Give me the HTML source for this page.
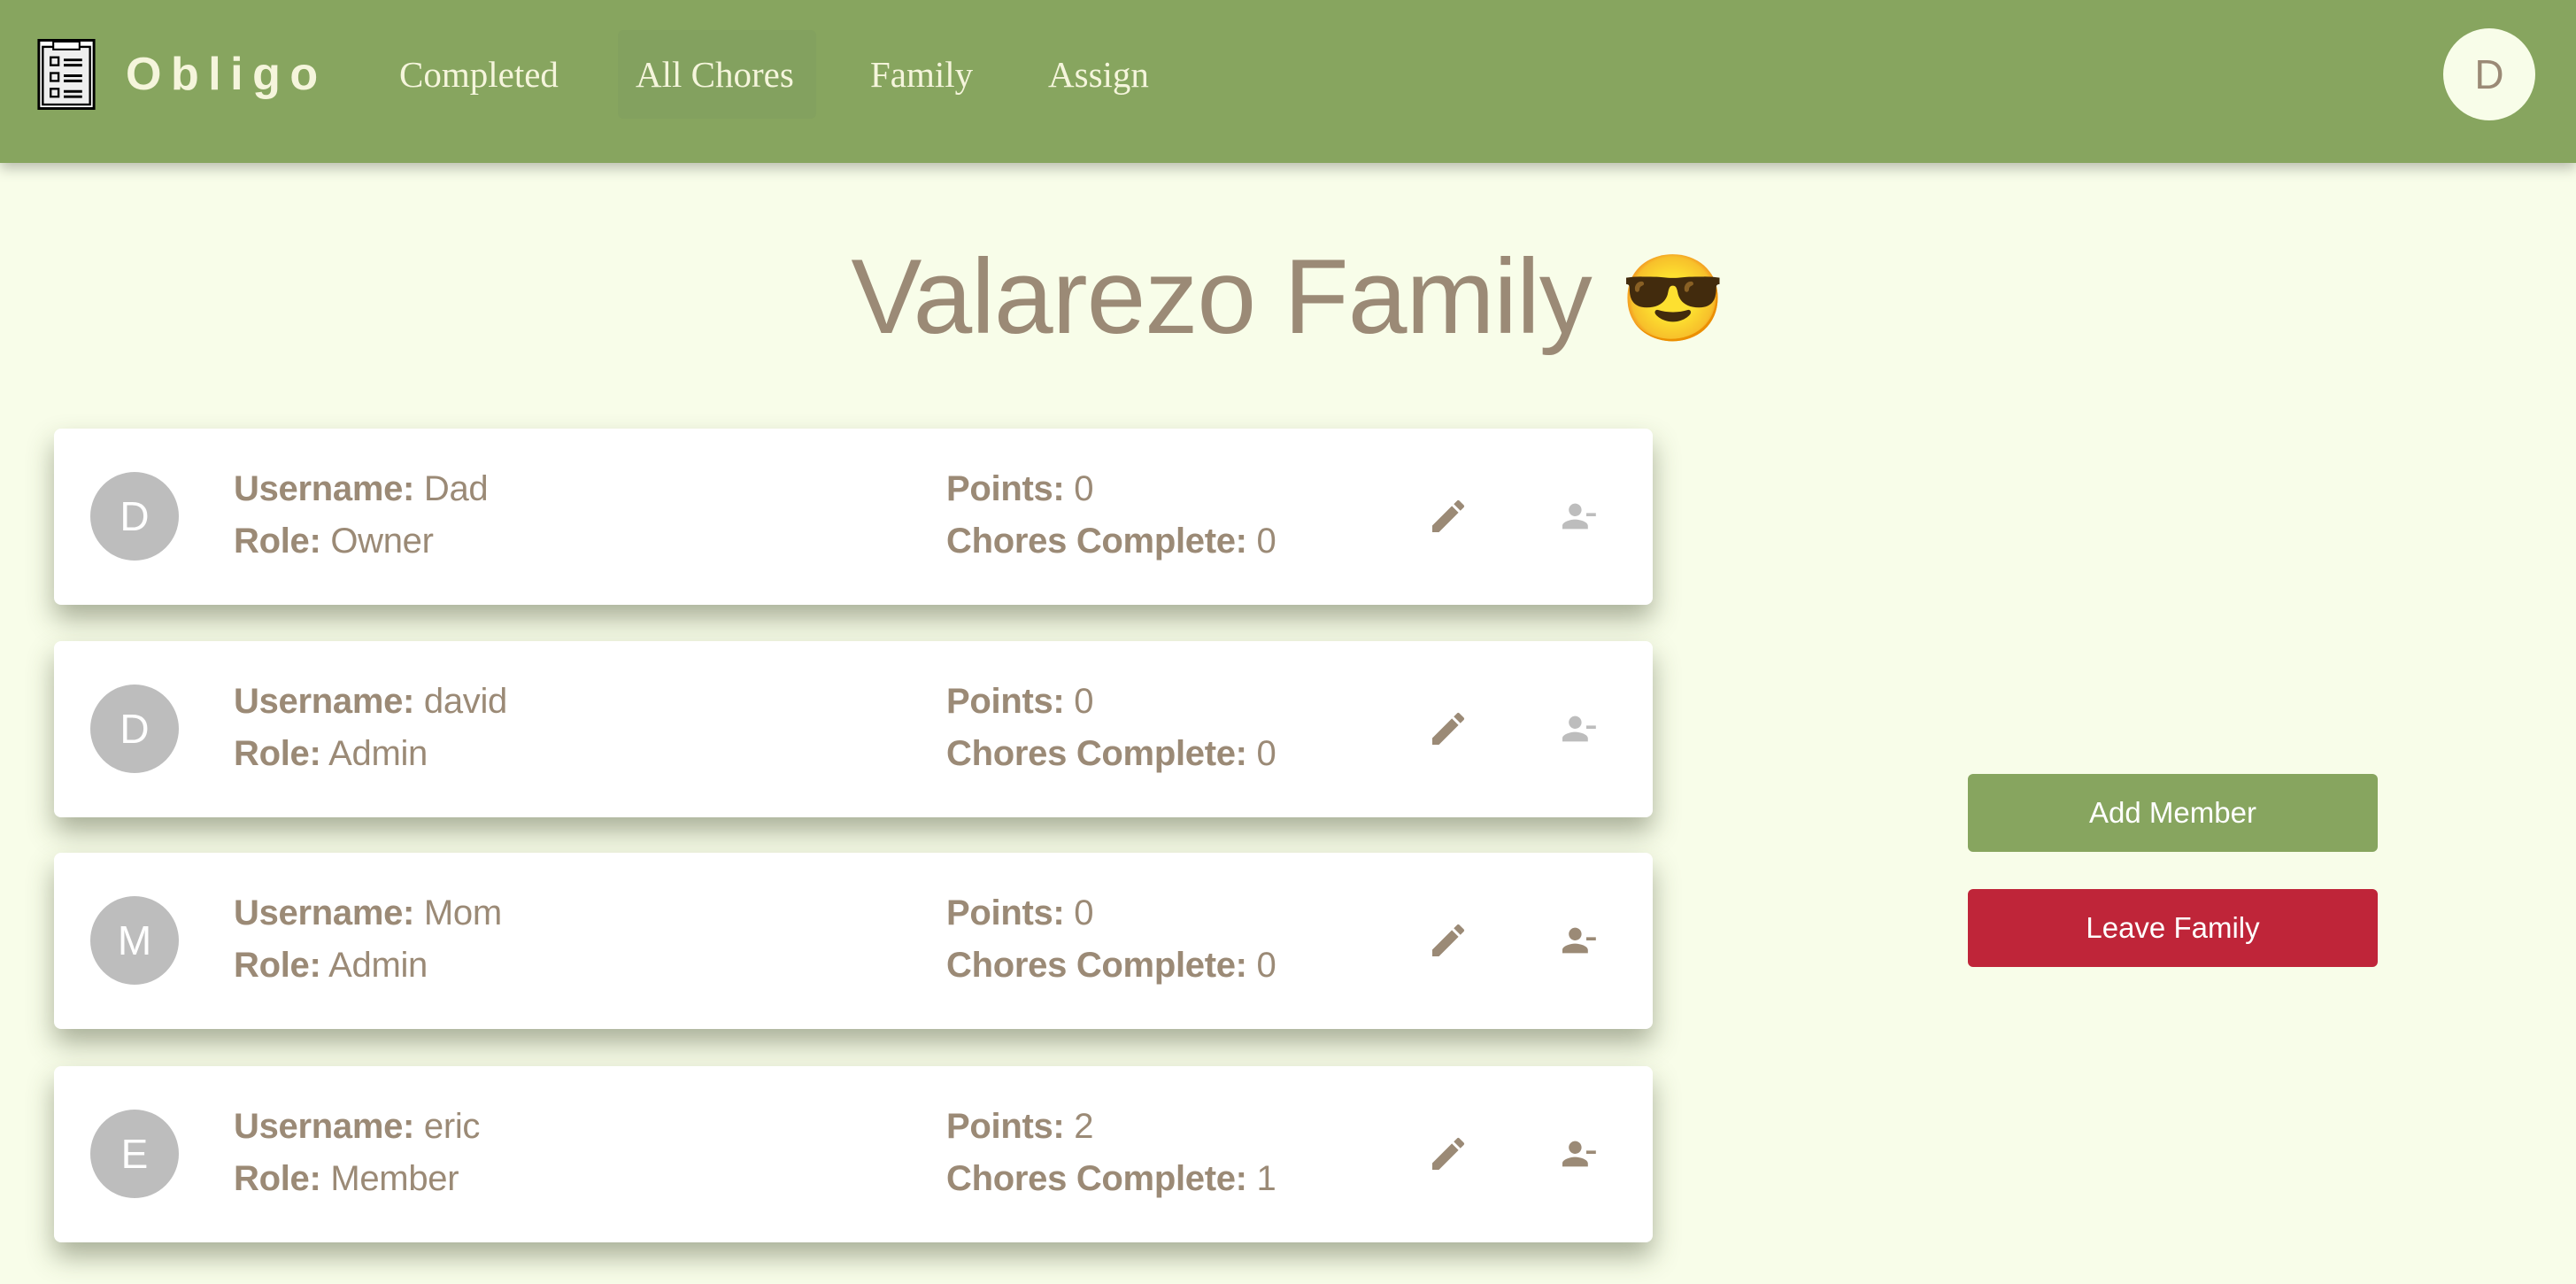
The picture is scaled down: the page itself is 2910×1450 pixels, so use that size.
<!DOCTYPE html>
<html><head><meta charset="utf-8"><style>
*{margin:0;padding:0;box-sizing:border-box}
body{width:2910px;height:1450px;background:#f8fde9;font-family:"Liberation Sans",sans-serif;position:relative;overflow:hidden}
.nav{position:absolute;left:0;top:0;width:2910px;height:184px;background:#87a55f;box-shadow:0 6px 14px rgba(0,0,0,.25);z-index:2}
.logo{position:absolute;left:42px;top:44px}
.brand{position:absolute;left:142px;top:54px;font-size:52px;font-weight:bold;letter-spacing:10.5px;color:#f5f5dc}
.link{position:absolute;top:60px;font-family:"Liberation Serif",serif;font-size:41px;color:#f5f5dc}
.hl{position:absolute;left:698px;top:34px;width:224px;height:100px;background:#83a15f;border-radius:6px}
.av{position:absolute;left:2760px;top:32px;width:104px;height:104px;border-radius:50%;background:#f8fde9;color:#9b8a76;font-size:46px;text-align:center;line-height:104px}
h1{position:absolute;left:0;width:2910px;top:266px;text-align:center;font-weight:normal;font-size:120px;color:#9b8a76;letter-spacing:-1px}
h1 span{font-family:"Noto Color Emoji","Noto Emoji",sans-serif;font-size:96px;vertical-align:6px}
.card{position:absolute;left:61px;width:1806px;height:199px;background:#fff;border-radius:8px;box-shadow:0 16px 30px rgba(60,70,40,.42)}
.ca{position:absolute;left:41px;top:49px;width:100px;height:100px;border-radius:50%;background:#bdbdbd;color:#fff;font-size:46px;text-align:center;line-height:100px}
.t{position:absolute;font-size:40px;color:#9b8a76;white-space:nowrap;letter-spacing:-0.3px}
.t b{font-weight:bold}
.ic{position:absolute;top:75px;width:48px;height:48px}
.btn{position:absolute;left:2223px;width:463px;height:88px;border-radius:6px;color:#fff;font-size:33px;text-align:center;line-height:88px}
</style></head><body>
<div class="nav">
<svg class="logo" width="66" height="80" viewBox="0 0 22 27"><rect x=".5" y=".5" width="21" height="26" fill="#fff" stroke="#000"/><rect x="2" y="3" width="18" height="22" fill="#eee" stroke="#000" stroke-width=".8"/><rect x="6" y="1" width="10" height="3" fill="#fff" stroke="#000" stroke-width=".7"/><g fill="none" stroke="#000" stroke-width=".8"><rect x="5" y="7" width="3" height="3"/><rect x="5" y="13" width="3" height="3"/><rect x="5" y="19" width="3" height="3"/></g><g stroke="#000" stroke-width="1"><path d="M10 8h7M10 10h7M10 14h7M10 16h7M10 20h7M10 22h7"/></g></svg>
<div class="brand">Obligo</div>
<div class="hl"></div>
<div class="link" style="left:451px">Completed</div>
<div class="link" style="left:718px">All Chores</div>
<div class="link" style="left:983px">Family</div>
<div class="link" style="left:1184px">Assign</div>
<div class="av">D</div>
</div>
<h1>Valarezo Family <span>😎</span></h1>

<div class="card" style="top:484px"><div class="ca">D</div>
<div class="t" style="left:203px;top:46px"><b>Username:</b> Dad</div><div class="t" style="left:203px;top:105px"><b>Role:</b> Owner</div>
<div class="t" style="left:1008px;top:46px"><b>Points:</b> 0</div><div class="t" style="left:1008px;top:105px"><b>Chores Complete:</b> 0</div>
<svg class="ic" style="left:1551px" viewBox="0 0 24 24"><path fill="#9b8a76" d="M3 17.25V21h3.75L17.81 9.94l-3.75-3.75L3 17.25zM20.71 7.04a1 1 0 000-1.41l-2.34-2.34a1 1 0 00-1.41 0l-1.83 1.83 3.75 3.75 1.83-1.83z"/></svg>
<svg class="ic" style="left:1698px" viewBox="0 0 24 24"><path fill="#bdbdbd" d="M14 8c0-2.21-1.79-4-4-4S6 5.790 6 8s1.79 4 4 4 4-1.79 4-4zm3 2v2h6v-2h-6zM2 18v2h16v-2c0-2.66-5.33-4-8-4s-8 1.34-8 4z" transform="translate(12 12) scale(.9) translate(-12 -12)"/></svg></div>

<div class="card" style="top:724px"><div class="ca">D</div>
<div class="t" style="left:203px;top:46px"><b>Username:</b> david</div><div class="t" style="left:203px;top:105px"><b>Role:</b> Admin</div>
<div class="t" style="left:1008px;top:46px"><b>Points:</b> 0</div><div class="t" style="left:1008px;top:105px"><b>Chores Complete:</b> 0</div>
<svg class="ic" style="left:1551px" viewBox="0 0 24 24"><path fill="#9b8a76" d="M3 17.25V21h3.75L17.81 9.94l-3.75-3.75L3 17.25zM20.71 7.04a1 1 0 000-1.41l-2.34-2.34a1 1 0 00-1.41 0l-1.83 1.83 3.75 3.75 1.83-1.83z"/></svg>
<svg class="ic" style="left:1698px" viewBox="0 0 24 24"><path fill="#bdbdbd" d="M14 8c0-2.21-1.79-4-4-4S6 5.79 6 8s1.79 4 4 4 4-1.79 4-4zm3 2v2h6v-2h-6zM2 18v2h16v-2c0-2.66-5.33-4-8-4s-8 1.34-8 4z" transform="translate(12 12) scale(.9) translate(-12 -12)"/></svg></div>

<div class="card" style="top:963px"><div class="ca">M</div>
<div class="t" style="left:203px;top:46px"><b>Username:</b> Mom</div><div class="t" style="left:203px;top:105px"><b>Role:</b> Admin</div>
<div class="t" style="left:1008px;top:46px"><b>Points:</b> 0</div><div class="t" style="left:1008px;top:105px"><b>Chores Complete:</b> 0</div>
<svg class="ic" style="left:1551px" viewBox="0 0 24 24"><path fill="#9b8a76" d="M3 17.25V21h3.75L17.81 9.94l-3.75-3.75L3 17.25zM20.71 7.04a1 1 0 000-1.41l-2.34-2.34a1 1 0 00-1.41 0l-1.83 1.83 3.75 3.75 1.83-1.83z"/></svg>
<svg class="ic" style="left:1698px" viewBox="0 0 24 24"><path fill="#9b8a76" d="M14 8c0-2.21-1.79-4-4-4S6 5.79 6 8s1.79 4 4 4 4-1.79 4-4zm3 2v2h6v-2h-6zM2 18v2h16v-2c0-2.66-5.33-4-8-4s-8 1.34-8 4z" transform="translate(12 12) scale(.9) translate(-12 -12)"/></svg></div>

<div class="card" style="top:1204px"><div class="ca">E</div>
<div class="t" style="left:203px;top:46px"><b>Username:</b> eric</div><div class="t" style="left:203px;top:105px"><b>Role:</b> Member</div>
<div class="t" style="left:1008px;top:46px"><b>Points:</b> 2</div><div class="t" style="left:1008px;top:105px"><b>Chores Complete:</b> 1</div>
<svg class="ic" style="left:1551px" viewBox="0 0 24 24"><path fill="#9b8a76" d="M3 17.25V21h3.75L17.81 9.94l-3.75-3.75L3 17.25zM20.71 7.04a1 1 0 000-1.41l-2.34-2.34a1 1 0 00-1.41 0l-1.83 1.83 3.75 3.75 1.83-1.83z"/></svg>
<svg class="ic" style="left:1698px" viewBox="0 0 24 24"><path fill="#9b8a76" d="M14 8c0-2.21-1.79-4-4-4S6 5.79 6 8s1.79 4 4 4 4-1.79 4-4zm3 2v2h6v-2h-6zM2 18v2h16v-2c0-2.66-5.33-4-8-4s-8 1.34-8 4z" transform="translate(12 12) scale(.9) translate(-12 -12)"/></svg></div>

<div class="btn" style="top:874px;background:#87a55f">Add Member</div>
<div class="btn" style="top:1004px;background:#bf2539">Leave Family</div>
</body></html>
